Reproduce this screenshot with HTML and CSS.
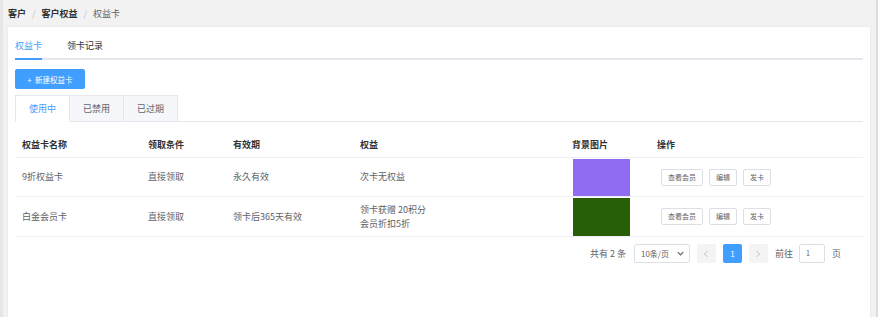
FILE: index.html
```html
<!DOCTYPE html>
<html lang="zh-CN">
<head>
  <meta charset="UTF-8" />
  <title>权益卡</title>
  <link rel="stylesheet" href="styles.css">
</head>
<body>
  <div class="crumbs">
    <b>客户</b><span class="sep">/</span><b>客户权益</b><span class="sep">/</span><span class="cur">权益卡</span>
  </div>
  <div class="card">
    <div class="nav">
      <div class="nav-item active">权益卡</div>
      <div class="nav-item">领卡记录</div>
    </div>
    <button class="btn-primary">+&nbsp; 新建权益卡</button>
    <div class="tabs">
      <div class="tab active">使用中</div>
      <div class="tab">已禁用</div>
      <div class="tab">已过期</div>
    </div>
    <table>
      <colgroup>
        <col style="width:126px"><col style="width:85px"><col style="width:127px"><col style="width:212px"><col style="width:85px"><col>
      </colgroup>
      <tr class="head">
        <th>权益卡名称</th><th>领取条件</th><th>有效期</th><th>权益</th><th>背景图片</th><th>操作</th>
      </tr>
      <tr>
        <td>9折权益卡</td><td>直接领取</td><td>永久有效</td><td>次卡无权益</td>
        <td><div class="bg" style="background:#8f6cf2"></div></td>
        <td class="ops"><span class="btn">查看会员</span><span class="btn">编辑</span><span class="btn">发卡</span></td>
      </tr>
      <tr>
        <td>白金会员卡</td><td>直接领取</td><td>领卡后365天有效</td><td>领卡获赠 20积分<br>会员折扣5折</td>
        <td><div class="bg" style="background:#285e05"></div></td>
        <td class="ops"><span class="btn">查看会员</span><span class="btn">编辑</span><span class="btn">发卡</span></td>
      </tr>
    </table>
    <div class="pager">
      <span class="total">共有 2 条</span>
      <span class="select">10条/页<svg width="9" height="9" viewBox="0 0 10 10"><path d="M2 3.5l3 3 3-3" fill="none" stroke="#606266" stroke-width="1.3"/></svg></span>
      <span class="pbtn"><svg width="8" height="8" viewBox="0 0 10 10"><path d="M6.5 1.5L3 5l3.5 3.5" fill="none" stroke="#b0b3b8" stroke-width="1"/></svg></span>
      <span class="pbtn cur">1</span>
      <span class="pbtn"><svg width="8" height="8" viewBox="0 0 10 10"><path d="M3.5 1.5L7 5 3.5 8.5" fill="none" stroke="#b0b3b8" stroke-width="1"/></svg></span>
      <span class="goto">前往</span>
      <span class="input">1</span>
      <span class="goto">页</span>
    </div>
  </div>
</body>
</html>
```

FILE: styles.css
```css
body { margin: 0; background: #f2f2f2; font-family: "Noto Sans CJK SC", "Noto Sans", sans-serif; font-size: 9px; color: #606266; height: 317px; overflow: hidden; border-left: 3px solid #e6e6e6; border-right: 2px solid #dcdcdc; box-sizing: border-box; }
.crumbs { height: 27px; line-height: 27px; padding-left: 5px; color: #303133; }
.crumbs b { font-weight: bold; }
.crumbs .sep { color: #c0c4cc; margin: 0 6px; }
.crumbs .cur { color: #606266; }
.card { box-sizing: border-box; background: #fff; margin: 0 6px 0 5px; padding: 10px 7px 0; height: 290px; box-shadow: 0 0 2px rgba(0,0,0,0.08); }
.nav { display: flex; height: 21px; border-bottom: 2px solid #e4e7ed; }
.nav-item { margin-right: 25px; line-height: 18px; color: #303133; position: relative; }
.nav-item.active { color: #409eff; }
.nav-item.active::after { content: ""; position: absolute; left: 0; right: 0; bottom: -2px; height: 2px; background: #409eff; }
.btn-primary { display: block; margin-top: 9px; height: 20px; width: 70px; padding: 0; border: 0; border-radius: 2px; background: #409eff; color: #fff; font-family: inherit; font-size: 7.5px; }
.tabs { display: flex; margin-top: 6px; height: 26px; border-bottom: 1px solid #e4e7ed; }
.tab { width: 53px; line-height: 25px; text-align: center; background: #f5f7fa; border: 1px solid #e4e7ed; border-left: 0; border-bottom: 0; color: #606266; }
.tab:first-child { border-left: 1px solid #e4e7ed; }
.tab.active { background: #fff; color: #409eff; height: 26px; }
table { width: 100%; border-collapse: collapse; table-layout: fixed; margin-top: 9px; }
th { text-align: left; font-weight: bold; color: #303133; height: 26px; padding: 0 7px; border-bottom: 1px solid #ebeef5; }
td { height: 38px; padding: 0 7px; border-bottom: 1px solid #ebeef5; line-height: 14px; }
tr:last-child td { height: 39px; }
.bg { width: 57px; height: 37px; margin-left: 1px; }
tr:last-child .bg { height: 38px; }
.ops { padding-left: 11px; }
.btn { display: inline-block; height: 15px; line-height: 15px; padding: 0 6px; margin-right: 6px; border: 1px solid #dcdfe6; border-radius: 2px; font-size: 7px; color: #606266; }
.pager { display: flex; justify-content: flex-end; align-items: center; margin-top: 7px; padding-right: 16px; height: 19px; }
.total { margin-right: 8px; }
.select { display: flex; align-items: center; justify-content: space-between; box-sizing: border-box; width: 56px; height: 19px; padding: 0 4px 0 6px; border: 1px solid #dcdfe6; border-radius: 2px; font-size: 8px; margin-right: 7px; }
.pbtn { display: flex; align-items: center; justify-content: center; width: 19px; height: 19px; background: #f4f4f5; border-radius: 2px; margin-right: 7px; color: #606266; }
.pbtn.cur { background: #409eff; color: #fff; font-size: 8px; }
.goto { margin-right: 6px; }
.input { box-sizing: border-box; width: 26px; height: 19px; line-height: 17px; padding-left: 6px; border: 1px solid #dcdfe6; border-radius: 2px; font-size: 7px; margin-right: 7px; }
```
